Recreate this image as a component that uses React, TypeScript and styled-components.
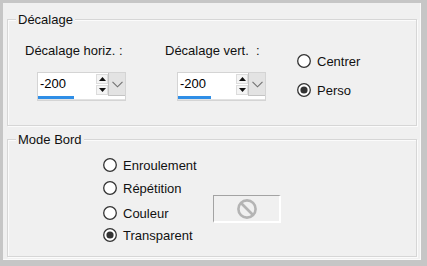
import React from "react";
import styled, { createGlobalStyle } from "styled-components";

const GlobalStyle = createGlobalStyle`
  html, body {
    margin: 0;
    padding: 0;
  }
  body {
    font-family: "Liberation Sans", Arial, sans-serif;
    font-size: 13px;
    color: #111;
    background: #c6c6c6;
  }
`;

const Frame = styled.div`
  width: 427px;
  height: 266px;
  box-sizing: border-box;
  padding: 3px 6px 6px 3px;
  background: #c6c6c6;
`;

const Panel = styled.div`
  height: 100%;
  box-sizing: border-box;
  background: #f0f0f0;
  padding: 16px 4px 0 4px;
  display: flex;
  flex-direction: column;
  gap: 13px;
  box-shadow: inset -1px -1px 0 #fafafa;
`;

const GroupBox = styled.div<{ $h: number }>`
  height: ${(p) => p.$h}px;
  box-sizing: border-box;
  border: 1px solid #d6d6d6;
  box-shadow: inset 1px 1px 0 #fbfbfb, 1px 1px 0 #fbfbfb;
  display: flex;
  flex-direction: column;
`;

const Legend = styled.span`
  align-self: flex-start;
  margin: -8px 0 0 8px;
  padding: 0 2px;
  line-height: 15px;
  background: #f0f0f0;
`;

const OffsetRow = styled.div`
  display: flex;
  margin-top: 16px;
  padding-left: 17px;
`;

const FieldCol = styled.div<{ $w: number }>`
  width: ${(p) => p.$w}px;
  display: flex;
  flex-direction: column;
  align-items: flex-start;
`;

const FieldLabel = styled.span`
  line-height: 15px;
  white-space: pre;
`;

const Spin = styled.div`
  margin: 14px 0 0 12px;
  width: 89px;
  height: 29px;
  box-sizing: border-box;
  border: 1px solid #d4d4d4;
  background: #fff;
  display: flex;
  flex-direction: column;
`;

const SpinTop = styled.div`
  display: flex;
  height: 24px;
`;

const SpinValue = styled.span`
  flex: 1;
  padding-left: 2px;
  line-height: 22px;
  color: #000;
`;

const Steps = styled.div`
  width: 12px;
  display: flex;
  flex-direction: column;
  gap: 1px;
  padding-top: 1px;
`;

const Step = styled.div`
  height: 10px;
  box-sizing: border-box;
  border: 1px solid #dcdcdc;
  background: #f4f4f4;
  display: flex;
  align-items: center;
  justify-content: center;
`;

const Drop = styled.div`
  width: 17px;
  box-sizing: border-box;
  background: #e3e3e3;
  border: 1px solid #c4c4c4;
  border-top: none;
  border-right: none;
  display: flex;
  align-items: center;
  justify-content: center;
`;

const Track = styled.div`
  height: 3px;
  margin-top: 0;
  background: #fff;
  border-bottom: 1px solid #e2e2e2;
`;

const Fill = styled.div`
  height: 3px;
  background: #2f8ee6;
`;

const RadioCol = styled.div<{ $mt: number; $pl?: number }>`
  display: flex;
  flex-direction: column;
  margin-top: ${(p) => p.$mt}px;
  padding-left: ${(p) => p.$pl ?? 0}px;
`;

const RadioRow = styled.div<{ $mt?: number }>`
  display: flex;
  align-items: center;
  height: 20px;
  gap: 6px;
  margin-top: ${(p) => p.$mt ?? 0}px;
`;

const RadioText = styled.span<{ $w?: number }>`
  line-height: 15px;
  ${(p) => (p.$w ? `width: ${p.$w}px;` : "")}
`;

const ColorButton = styled.div`
  width: 68px;
  height: 28px;
  margin-bottom: 8px;
  box-sizing: border-box;
  border-top: 1px solid #a3a3a3;
  border-left: 1px solid #a3a3a3;
  border-right: 2px solid #fff;
  border-bottom: 2px solid #fff;
  background: #f0f0f0;
  display: flex;
  align-items: center;
  justify-content: center;
`;

const RadioIcon = ({ on }: { on?: boolean }) => (
  <svg width="14" height="14" viewBox="0 0 14 14">
    <circle cx="7" cy="7" r="6.3" fill="#fff" stroke="#333" strokeWidth="1.3" />
    {on && <circle cx="7" cy="7" r="3.6" fill="#333" />}
  </svg>
);

const Radio = ({ label, on, mt, w, children }: { label: string; on?: boolean; mt?: number; w?: number; children?: React.ReactNode }) => (
  <RadioRow $mt={mt}>
    <RadioIcon on={on} />
    <RadioText $w={w}>{label}</RadioText>
    {children}
  </RadioRow>
);

const SpinBox = ({ value, fill }: { value: string; fill: number }) => (
  <Spin>
    <SpinTop>
      <SpinValue>{value}</SpinValue>
      <Steps>
        <Step>
          <svg width="7" height="4" viewBox="0 0 7 4">
            <path d="M0 4 L3.5 0 L7 4 Z" fill="#111" />
          </svg>
        </Step>
        <Step>
          <svg width="7" height="4" viewBox="0 0 7 4">
            <path d="M0 0 L3.5 4 L7 0 Z" fill="#111" />
          </svg>
        </Step>
      </Steps>
      <Drop>
        <svg width="11" height="7" viewBox="0 0 11 7">
          <polyline points="0.5,0.8 5.5,5.8 10.5,0.8" fill="none" stroke="#707070" strokeWidth="1.1" />
        </svg>
      </Drop>
    </SpinTop>
    <Track>
      <Fill style={{ width: fill }} />
    </Track>
  </Spin>
);

export default function App() {
  return (
    <>
      <GlobalStyle />
      <Frame>
        <Panel>
          <GroupBox $h={107}>
            <Legend>Décalage</Legend>
            <OffsetRow>
              <FieldCol $w={140}>
                <FieldLabel>Décalage horiz. :</FieldLabel>
                <SpinBox value="-200" fill={36} />
              </FieldCol>
              <FieldCol $w={132}>
                <FieldLabel>Décalage vert.  :</FieldLabel>
                <SpinBox value="-200" fill={33} />
              </FieldCol>
              <RadioCol $mt={8}>
                <Radio label="Centrer" />
                <Radio label="Perso" on mt={9} />
              </RadioCol>
            </OffsetRow>
          </GroupBox>
          <GroupBox $h={118}>
            <Legend>Mode Bord</Legend>
            <RadioCol $mt={8} $pl={95}>
              <Radio label="Enroulement" />
              <Radio label="Répétition" mt={3} />
              <Radio label="Couleur" mt={5} w={84}>
                <ColorButton>
                  <svg width="22" height="22" viewBox="0 0 22 22">
                    <circle cx="11" cy="11" r="8.6" fill="none" stroke="#b4b4b4" strokeWidth="2.6" />
                    <line x1="5" y1="5" x2="17" y2="17" stroke="#b4b4b4" strokeWidth="2.6" />
                  </svg>
                </ColorButton>
              </Radio>
              <Radio label="Transparent" on mt={2} />
            </RadioCol>
          </GroupBox>
        </Panel>
      </Frame>
    </>
  );
}
